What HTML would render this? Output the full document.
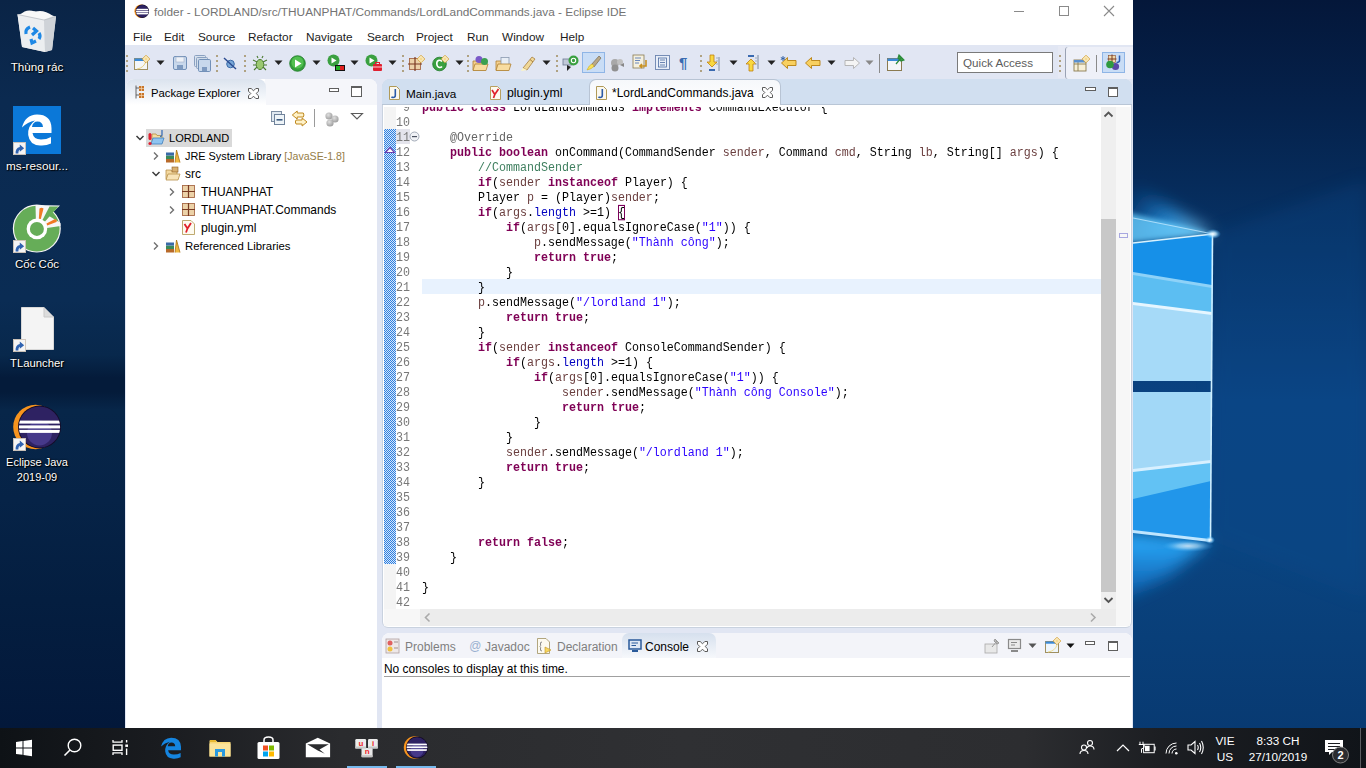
<!DOCTYPE html>
<html><head><meta charset="utf-8">
<style>
*{margin:0;padding:0;box-sizing:border-box}
html,body{width:1366px;height:768px;overflow:hidden}
body{position:relative;font-family:"Liberation Sans",sans-serif;background:#062445}
.a{position:absolute}
.dl{position:absolute;color:#fff;font-size:12px;text-align:center;width:74px;left:0;text-shadow:0 0 2px #000,1px 1px 1px #000;white-space:nowrap;line-height:15px}
.mi{position:absolute;top:30px;font-size:12px;color:#1c1c1c;white-space:pre;line-height:15px}
.code{font-family:"Liberation Mono",monospace;font-size:11.667px;white-space:pre;color:#000}
.k{color:#7f0055;font-weight:bold}
.s{color:#2a00ff}
.c{color:#3f7f5f}
.f{color:#0000c0}
.v{color:#6a3e3e}
.an{color:#646464}
.ln{position:absolute;left:0;right:0;height:15px;line-height:15px;transform:scaleY(1.1);transform-origin:0 11px}
.br{outline:1px solid #7a005a;outline-offset:-1px}
</style></head><body>
<!-- desktop -->
<div class="a" style="left:0;top:0;width:1366px;height:728px;background:linear-gradient(180deg,#0a2446 0px,#0b2a50 100px,#0a2c54 300px,#08284c 355px,#041b3a 378px,#041b3a 392px,#072649 410px,#062347 500px,#041e40 600px,#03183a 728px)"></div>
<svg class="a" style="left:1133px;top:0" width="233" height="728" viewBox="1133 0 233 728">
  <defs>
    <linearGradient id="bgR" x1="0" y1="0" x2="0" y2="728" gradientUnits="userSpaceOnUse">
      <stop offset="0" stop-color="#04173a"/>
      <stop offset="0.15" stop-color="#05224c"/>
      <stop offset="0.35" stop-color="#073468"/>
      <stop offset="0.55" stop-color="#0a4382"/>
      <stop offset="0.75" stop-color="#0a4480"/>
      <stop offset="1" stop-color="#083a72"/>
    </linearGradient>
    <linearGradient id="gTop" x1="1213" y1="234" x2="1133" y2="180" gradientUnits="userSpaceOnUse">
      <stop offset="0" stop-color="#9fe0ff" stop-opacity="0.95"/>
      <stop offset="0.5" stop-color="#2aa0f0" stop-opacity="0.7"/>
      <stop offset="1" stop-color="#0a5ab0" stop-opacity="0"/>
    </linearGradient>
    <linearGradient id="gBot" x1="1133" y1="540" x2="1133" y2="640" gradientUnits="userSpaceOnUse">
      <stop offset="0" stop-color="#2aa8f8" stop-opacity="1"/>
      <stop offset="0.5" stop-color="#1478d0" stop-opacity="0.7"/>
      <stop offset="1" stop-color="#0a4a90" stop-opacity="0"/>
    </linearGradient>
    <linearGradient id="gSide" x1="1213" y1="0" x2="1366" y2="0" gradientUnits="userSpaceOnUse">
      <stop offset="0" stop-color="#0b55a0" stop-opacity="0.7"/>
      <stop offset="1" stop-color="#0b55a0" stop-opacity="0"/>
    </linearGradient>
    <filter id="blur8" x="-50%" y="-50%" width="200%" height="200%"><feGaussianBlur stdDeviation="8"/></filter><filter id="blur3" x="-50%" y="-50%" width="200%" height="200%"><feGaussianBlur stdDeviation="2.5"/></filter>
    <radialGradient id="spot" cx="0.5" cy="0.5" r="0.5">
      <stop offset="0" stop-color="#fff" stop-opacity="1"/>
      <stop offset="0.4" stop-color="#bfe8ff" stop-opacity="0.8"/>
      <stop offset="1" stop-color="#3ab0ff" stop-opacity="0"/>
    </radialGradient>
  </defs>
  <rect x="1133" y="0" width="233" height="728" fill="url(#bgR)"/>
  <polygon points="1213,234 1366,180 1366,600 1210,540" fill="#0b4b8e" opacity="0.25" filter="url(#blur8)"/>
  <polygon points="1120,175 1213,234 1120,245" fill="url(#gTop)" filter="url(#blur8)"/><polygon points="1125,212 1213,233 1125,243" fill="#6cd0ff" opacity="0.75" filter="url(#blur3)"/>
  <polygon points="1120,531 1210,540 1170,575 1120,600" fill="url(#gBot)" filter="url(#blur8)"/>
  <!-- upper pane -->
  <polygon points="1133,243 1213,234 1212,381 1133,381" fill="#1690e8"/>
  <polygon points="1133,274 1212,287 1212,381 1133,381" fill="#5cbef2"/>
  <polygon points="1133,304 1212,314 1212,381 1133,381" fill="#a6daf8"/>
  <polygon points="1133,302 1212,312 1212,315 1133,305" fill="#e6f6ff"/>
  <polygon points="1133,272 1212,285 1212,288 1133,275" fill="#8ed2f8"/>
  <!-- lower pane -->
  <polygon points="1133,392 1212,392 1211,462 1133,471" fill="#a2d8f7"/>
  <polygon points="1133,471 1211,462 1210,540 1133,531" fill="#2196ea"/><polygon points="1133,471 1211,462 1211,481 1133,499" fill="#62c2f4"/>
  <polygon points="1133,469 1211,460 1211,463 1133,472" fill="#d8f0ff"/>
  <polygon points="1133,530 1210,539 1210,542 1133,533" fill="#bfe6ff"/>
  <!-- frame edges -->
  <line x1="1212.5" y1="234" x2="1210.5" y2="540" stroke="#cfefff" stroke-width="1.6"/>
  <line x1="1133" y1="243" x2="1213" y2="234" stroke="#d8f2ff" stroke-width="1.4"/>
  <line x1="1133" y1="218" x2="1213" y2="234" stroke="#bfe8ff" stroke-width="1.2" opacity="0.8"/>
  <ellipse cx="1213" cy="234" rx="8" ry="5" fill="url(#spot)"/>
  <ellipse cx="1188" cy="546" rx="26" ry="6" fill="url(#spot)" opacity="0.7"/><ellipse cx="1210" cy="540" rx="5" ry="4" fill="url(#spot)"/>
</svg>


<!-- eclipse window -->
<div class="a" style="left:125px;top:0;width:1008px;height:728px;background:#e1e6f3"></div>
<div class="a" style="left:125px;top:0;width:1008px;height:45px;background:#fff"></div>
<!-- title -->
<svg class="a" style="left:134px;top:4px" width="16" height="15" viewBox="0 0 16 15">
<defs><clipPath id="ecl3"><circle cx="8.3" cy="7.3" r="6.2"/></clipPath></defs>
<circle cx="7.2" cy="7.3" r="6.8" fill="#f7941e"/><circle cx="8.3" cy="7.3" r="6.7" fill="#140c28"/><circle cx="8.3" cy="7.3" r="6.2" fill="#2e2262"/>
<g clip-path="url(#ecl3)"><rect x="0" y="4.8" width="16" height="1.5" fill="#fff"/><rect x="0" y="6.9" width="16" height="1.5" fill="#fff"/><rect x="0" y="8.9" width="16" height="1.5" fill="#fff"/></g>
</svg>
<div class="a" style="left:154px;top:4px;font-size:11.84px;color:#737373;white-space:pre;line-height:16px">folder - LORDLAND/src/THUANPHAT/Commands/LordLandCommands.java - Eclipse IDE</div>
<div class="a" style="left:1014px;top:11px;width:10px;height:1px;background:#8a8a8a"></div>
<div class="a" style="left:1059px;top:6px;width:10px;height:10px;border:1px solid #8a8a8a"></div>
<svg class="a" style="left:1103px;top:5px" width="12" height="12" viewBox="0 0 12 12"><path d="M1 1L11 11M11 1L1 11" stroke="#8a8a8a" stroke-width="1.1"/></svg>
<!-- menu -->
<div class="mi" style="left:133px;font-size:11.8px">File</div>
<div class="mi" style="left:164px;font-size:11.8px">Edit</div>
<div class="mi" style="left:198px;font-size:11.8px">Source</div>
<div class="mi" style="left:248px;font-size:11.8px">Refactor</div>
<div class="mi" style="left:306px;font-size:11.8px">Navigate</div>
<div class="mi" style="left:367px;font-size:11.8px">Search</div>
<div class="mi" style="left:416px;font-size:11.8px">Project</div>
<div class="mi" style="left:467px;font-size:11.8px">Run</div>
<div class="mi" style="left:502px;font-size:11.8px">Window</div>
<div class="mi" style="left:560px;font-size:11.8px">Help</div>
<!-- toolbar -->
<div class="a" style="left:125px;top:45px;width:1008px;height:34px;background:#e1e6f3"></div>
<div class="a" style="left:126px;top:55px;width:2px;height:17px;background:repeating-linear-gradient(180deg,#b0a282 0 2px,transparent 2px 5px)"></div>
<svg class="a" style="left:134px;top:55px" width="16" height="16" viewBox="0 0 16 16"><rect x="0.5" y="3.5" width="13" height="11" fill="#f4f6f8" stroke="#a09060"/><rect x="0.5" y="3.5" width="13" height="2.5" fill="#3a8ad8"/><path d="M3 14Q10 13 12 6" stroke="#e8d080" fill="none"/><path d="M12 0.3L15.7 4L12 7.7L8.3 4Z" fill="#fffbe8" stroke="#d49a20" stroke-width="0.9"/><path d="M12 2V6M10 4H14" stroke="#f0c860" stroke-width="0.8"/></svg>
<svg class="a" style="left:156px;top:60px" width="9" height="6" viewBox="0 0 9 6"><path d="M0.5 0.5H8.5L4.5 5Z" fill="#222"/></svg>
<svg class="a" style="left:172px;top:55px" width="16" height="16" viewBox="0 0 16 16"><rect x="1.5" y="1.5" width="13" height="13" rx="1.5" fill="#c8d8ec" stroke="#7290b8"/><rect x="4" y="2" width="8" height="5" fill="#eef2f8" stroke="#a0b0c8" stroke-width="0.6"/><rect x="5" y="10" width="6" height="4.5" fill="#7e9ac0"/></svg>
<svg class="a" style="left:194px;top:55px" width="17" height="17" viewBox="0 0 17 17"><rect x="0.5" y="0.5" width="11" height="11" rx="1" fill="#d8e2ee" stroke="#8aa0c0"/><rect x="2.5" y="2.5" width="11" height="11" rx="1" fill="#d0dcea" stroke="#8aa0c0"/><rect x="4.5" y="4.5" width="12" height="12" rx="1.2" fill="#c8d8ec" stroke="#7290b8"/><rect x="8" y="12" width="5" height="4" fill="#7e9ac0"/></svg>
<div class="a" style="left:216px;top:55px;width:2px;height:17px;background:repeating-linear-gradient(180deg,#b0a282 0 2px,transparent 2px 5px)"></div>
<svg class="a" style="left:222px;top:55px" width="16" height="16" viewBox="0 0 16 16"><circle cx="8.5" cy="9" r="3.8" fill="#7aa8d8" stroke="#3a6aa8"/><path d="M2 3L14 14" stroke="#2a4a90" stroke-width="1.4"/></svg>
<div class="a" style="left:244px;top:55px;width:2px;height:17px;background:repeating-linear-gradient(180deg,#b0a282 0 2px,transparent 2px 5px)"></div>
<svg class="a" style="left:252px;top:55px" width="16" height="16" viewBox="0 0 16 16"><ellipse cx="8" cy="9.5" rx="3.8" ry="5" fill="#9ac870" stroke="#4a7a30"/><path d="M1 5L5 7M15 5L11 7M1 10H4M15 10H12M2 15L5 12M14 15L11 12M6 3L5 1M10 3L11 1" stroke="#4a7a30" stroke-width="1.1"/></svg>
<svg class="a" style="left:274px;top:60px" width="9" height="6" viewBox="0 0 9 6"><path d="M0.5 0.5H8.5L4.5 5Z" fill="#222"/></svg>
<svg class="a" style="left:289px;top:55px" width="17" height="17" viewBox="0 0 17 17"><circle cx="8.5" cy="8.5" r="7.8" fill="#34a03a" stroke="#1e7a28" stroke-width="0.8"/><circle cx="8.5" cy="7.5" r="6" fill="#52c050"/><path d="M6 4.5L12.5 8.5L6 12.5Z" fill="#fff"/></svg>
<svg class="a" style="left:312px;top:60px" width="9" height="6" viewBox="0 0 9 6"><path d="M0.5 0.5H8.5L4.5 5Z" fill="#222"/></svg>
<svg class="a" style="left:327px;top:54px" width="18" height="18" viewBox="0 0 18 18"><circle cx="6.5" cy="6.5" r="6" fill="#3aa040"/><path d="M4.5 3.5L9.5 6.5L4.5 9.5Z" fill="#fff"/><rect x="8" y="11" width="10" height="6" fill="#111"/><rect x="9" y="12" width="4" height="4" fill="#20b020"/><rect x="13" y="12" width="4" height="4" fill="#e02020"/></svg>
<svg class="a" style="left:350px;top:60px" width="9" height="6" viewBox="0 0 9 6"><path d="M0.5 0.5H8.5L4.5 5Z" fill="#222"/></svg>
<svg class="a" style="left:365px;top:54px" width="18" height="18" viewBox="0 0 18 18"><circle cx="6.5" cy="6.5" r="6" fill="#3aa040"/><path d="M4.5 3.5L9.5 6.5L4.5 9.5Z" fill="#fff"/><rect x="8" y="10" width="9" height="7" rx="1" fill="#e02030"/><rect x="10.5" y="8.5" width="4" height="2.5" fill="none" stroke="#e02030"/><path d="M8 13H17" stroke="#fff" stroke-width="0.8"/></svg>
<svg class="a" style="left:388px;top:60px" width="9" height="6" viewBox="0 0 9 6"><path d="M0.5 0.5H8.5L4.5 5Z" fill="#222"/></svg>
<div class="a" style="left:402px;top:55px;width:2px;height:17px;background:repeating-linear-gradient(180deg,#b0a282 0 2px,transparent 2px 5px)"></div>
<svg class="a" style="left:408px;top:55px" width="17" height="17" viewBox="0 0 17 17"><rect x="1.5" y="3.5" width="11" height="11" fill="#ecd2a8" stroke="#a86a48" stroke-width="0.9"/><path d="M7 2V16M0 9H14" stroke="#7a3a22" stroke-width="1.2"/><path d="M13 0.3L16.7 4L13 7.7L9.3 4Z" fill="#fffbe8" stroke="#d49a20" stroke-width="0.9"/><path d="M13 2V6M11 4H15" stroke="#f0c860" stroke-width="0.8"/></svg>
<svg class="a" style="left:432px;top:55px" width="17" height="17" viewBox="0 0 17 17"><circle cx="7.5" cy="9" r="6.8" fill="#3aa040" stroke="#1e7a28" stroke-width="0.8"/><path d="M10 6.5Q8.5 5 7 5.3Q4.5 6 4.8 9Q5 12 7.5 12.5Q9 12.7 10 11.5" fill="none" stroke="#fff" stroke-width="1.6"/><path d="M13 0.3L16.7 4L13 7.7L9.3 4Z" fill="#fffbe8" stroke="#d49a20" stroke-width="0.9"/><path d="M13 2V6M11 4H15" stroke="#f0c860" stroke-width="0.8"/></svg>
<svg class="a" style="left:455px;top:60px" width="9" height="6" viewBox="0 0 9 6"><path d="M0.5 0.5H8.5L4.5 5Z" fill="#222"/></svg>
<div class="a" style="left:467px;top:55px;width:2px;height:17px;background:repeating-linear-gradient(180deg,#b0a282 0 2px,transparent 2px 5px)"></div>
<svg class="a" style="left:472px;top:55px" width="18" height="17" viewBox="0 0 18 17"><path d="M1 6H6L7 7.5H13V15H1Z" fill="#f4d090" stroke="#b08030" stroke-width="0.8"/><path d="M3 9H16L14 15.5H1Z" fill="#f8dca0" stroke="#b08030" stroke-width="0.8"/><circle cx="7" cy="4.5" r="3.5" fill="#7a5ac8"/><circle cx="12.5" cy="6.5" r="3.5" fill="#3aa050"/></svg>
<svg class="a" style="left:495px;top:55px" width="18" height="17" viewBox="0 0 18 17"><path d="M1 6H6L7 7.5H13V15H1Z" fill="#f4d090" stroke="#b08030" stroke-width="0.8"/><rect x="6" y="2.5" width="8" height="7" fill="#e8eef6" stroke="#8a9ab0" stroke-width="0.8"/><path d="M3 9H16L14 15.5H1Z" fill="#f8dca0" stroke="#b08030" stroke-width="0.8"/></svg>
<svg class="a" style="left:519px;top:54px" width="18" height="18" viewBox="0 0 18 18"><path d="M4 14L13 3L16 5L8 16Z" fill="#f0d898" stroke="#a88040" stroke-width="0.8"/><path d="M2 17L4 14L8 16Z" fill="#fff6c0"/><path d="M11 5.5L14 8" stroke="#a88040"/></svg>
<svg class="a" style="left:542px;top:60px" width="9" height="6" viewBox="0 0 9 6"><path d="M0.5 0.5H8.5L4.5 5Z" fill="#222"/></svg>
<div class="a" style="left:556px;top:55px;width:2px;height:17px;background:repeating-linear-gradient(180deg,#b0a282 0 2px,transparent 2px 5px)"></div>
<svg class="a" style="left:562px;top:55px" width="17" height="17" viewBox="0 0 17 17"><rect x="1" y="4" width="9" height="6" fill="#c0c8d8" stroke="#6a7890" stroke-width="0.8"/><path d="M5 10V16L9 12Z" fill="#222"/><circle cx="11.5" cy="5.5" r="5" fill="#3aa040"/><circle cx="11.5" cy="5.5" r="2.2" fill="none" stroke="#fff" stroke-width="1.1"/></svg>
<div class="a" style="left:582px;top:52px;width:23px;height:21px;background:#c9ddf6;border:1px solid #8fb5e6"></div>
<svg class="a" style="left:585px;top:54px" width="18" height="18" viewBox="0 0 18 18"><path d="M6 11L14 2L16 4L9 13Z" fill="#b8a888" stroke="#7a6a50" stroke-width="0.7"/><path d="M2 16Q4 11 7 10L9 12Q7 15 2 16Z" fill="#f6e060" stroke="#d0b020" stroke-width="0.6"/></svg>
<svg class="a" style="left:609px;top:55px" width="17" height="17" viewBox="0 0 17 17"><circle cx="6" cy="8" r="4" fill="#a8a8a8"/><circle cx="6" cy="13" r="3.5" fill="#909090"/><circle cx="11" cy="7" r="3" fill="#c0c0c0"/><path d="M11 10L15 8V12Z" fill="#888"/></svg>
<svg class="a" style="left:632px;top:54px" width="17" height="17" viewBox="0 0 17 17"><rect x="1" y="1" width="11" height="13" fill="#f4f0e0" stroke="#8a7a50" stroke-width="0.8"/><path d="M3 4H9M3 6.5H8M3 9H7" stroke="#5a7ab8" stroke-width="0.9"/><path d="M14 6V12H8M10 10L8 12L10 14" fill="none" stroke="#c89020" stroke-width="1.6"/></svg>
<svg class="a" style="left:654px;top:54px" width="17" height="17" viewBox="0 0 17 17"><rect x="1.5" y="1.5" width="14" height="14" fill="#e8eef8" stroke="#6a84b0" stroke-width="0.9"/><rect x="4.5" y="4" width="8" height="9" fill="none" stroke="#4a6aa0" stroke-width="0.8"/><path d="M6 6H11M6 8.5H11M6 11H11" stroke="#4a6aa0" stroke-width="0.8"/></svg>
<div class="a" style="left:679px;top:54px;font-size:15px;font-weight:bold;color:#3a6ab0;line-height:18px">¶</div>
<div class="a" style="left:700px;top:55px;width:2px;height:17px;background:repeating-linear-gradient(180deg,#b0a282 0 2px,transparent 2px 5px)"></div>
<svg class="a" style="left:704px;top:54px" width="18" height="18" viewBox="0 0 18 18"><path d="M6 1H10V8H13L8 13L3 8H6Z" fill="#f8d840" stroke="#c08010" stroke-width="0.8"/><path d="M15 3V17" stroke="#7a8aa0"/><path d="M12 4H14M12 7H14M12 10H14" stroke="#a0b0c0"/><rect x="5" y="15" width="6" height="2" fill="#3a6ab0"/></svg>
<svg class="a" style="left:729px;top:60px" width="9" height="6" viewBox="0 0 9 6"><path d="M0.5 0.5H8.5L4.5 5Z" fill="#222"/></svg>
<svg class="a" style="left:743px;top:54px" width="18" height="18" viewBox="0 0 18 18"><path d="M6 17H10V10H13L8 5L3 10H6Z" fill="#f8d840" stroke="#c08010" stroke-width="0.8"/><path d="M15 1V15" stroke="#7a8aa0"/><path d="M12 4H14M12 7H14M12 10H14" stroke="#a0b0c0"/><rect x="5" y="1" width="6" height="2" fill="#3a6ab0"/></svg>
<svg class="a" style="left:767px;top:60px" width="9" height="6" viewBox="0 0 9 6"><path d="M0.5 0.5H8.5L4.5 5Z" fill="#222"/></svg>
<svg class="a" style="left:780px;top:55px" width="18" height="16" viewBox="0 0 18 16"><path d="M1.5 8L7.5 2.5V5.5H16V10.5H7.5V13.5Z" fill="#f8d060" stroke="#b88010" stroke-width="0.9"/><path d="M3 1L3 6M0.8 2.5L5.2 4.5M0.8 4.5L5.2 2.5" stroke="#2a5aa0" stroke-width="0.9"/></svg>
<svg class="a" style="left:804px;top:55px" width="18" height="16" viewBox="0 0 18 16"><path d="M1.5 8L7.5 2.5V5.5H16V10.5H7.5V13.5Z" fill="#f8d060" stroke="#b88010" stroke-width="0.9"/></svg>
<svg class="a" style="left:827px;top:60px" width="9" height="6" viewBox="0 0 9 6"><path d="M0.5 0.5H8.5L4.5 5Z" fill="#222"/></svg>
<svg class="a" style="left:843px;top:55px" width="18" height="16" viewBox="0 0 18 16"><path d="M16.5 8L10.5 2.5V5.5H2V10.5H10.5V13.5Z" fill="#f4f4f4" stroke="#b0b0b0" stroke-width="0.9"/></svg>
<svg class="a" style="left:865px;top:60px" width="9" height="6" viewBox="0 0 9 6"><path d="M0.5 0.5H8.5L4.5 5Z" fill="#888"/></svg>
<div class="a" style="left:879px;top:54px;width:1px;height:19px;background:#8a8a8a"></div>
<svg class="a" style="left:887px;top:54px" width="18" height="18" viewBox="0 0 18 18"><rect x="0.5" y="4.5" width="14" height="12" fill="#f4f6f8" stroke="#8a7a50"/><rect x="0.5" y="4.5" width="14" height="2.5" fill="#3a8ad8"/><path d="M9 10L14 4M12 1L17 6L14 7L11 4Z" stroke="#2a8a3a" fill="#3aa040" stroke-width="1.2"/></svg>
<div class="a" style="left:957px;top:52px;width:96px;height:21px;background:#fff;border:1px solid #7a7a7a"></div>
<div class="a" style="left:963px;top:55px;font-size:11.66px;color:#5c5c5c;white-space:pre;line-height:15px">Quick Access</div>
<div class="a" style="left:1058px;top:46px;width:8px;height:32px;background:#e6e9f4"></div><div class="a" style="left:1065px;top:47px;width:68px;height:32px;background:#eef0f8;border-left:1px solid #9aa2b4;border-top-left-radius:3px;border-bottom-left-radius:3px"></div>
<div class="a" style="left:1059px;top:55px;width:2px;height:17px;background:repeating-linear-gradient(180deg,#b0a282 0 2px,transparent 2px 5px)"></div>
<svg class="a" style="left:1073px;top:55px" width="17" height="17" viewBox="0 0 17 17"><rect x="1" y="5" width="12" height="11" fill="#f8f0d8" stroke="#8a7a50" stroke-width="0.9"/><path d="M1 9H13M5 5V16" stroke="#8a7a50" stroke-width="0.9"/><rect x="1" y="5" width="12" height="2.5" fill="#5a90d0"/><path d="M13 0.3L16.7 4L13 7.7L9.3 4Z" fill="#fffbe8" stroke="#d49a20" stroke-width="0.9"/><path d="M13 2V6M11 4H15" stroke="#f0c860" stroke-width="0.8"/></svg>
<div class="a" style="left:1096px;top:55px;width:1px;height:17px;background:#8a8a8a"></div>
<div class="a" style="left:1102px;top:52px;width:23px;height:21px;background:#c9ddf6;border:1px solid #8fb5e6"></div>
<svg class="a" style="left:1104px;top:54px" width="19" height="18" viewBox="0 0 19 18"><rect x="4.5" y="1.5" width="7" height="7" fill="#f0d8a8" stroke="#8a4a28" stroke-width="0.6"/><path d="M8 0.5V9.5M3.5 5H12.5" stroke="#7a3a22" stroke-width="1"/><path d="M15.5 1.5V6.5Q15.5 8.5 12.5 8.5" fill="none" stroke="#2a5ab0" stroke-width="1.5"/><circle cx="11.5" cy="12.5" r="3.6" fill="#5a48a8"/><circle cx="6" cy="10.5" r="3.8" fill="#2f9a40"/></svg>

<!-- package explorer panel -->
<div class="a" style="left:126px;top:79px;width:251px;height:649px;background:#fff;border-top-left-radius:8px;border-top-right-radius:8px"></div>
<div class="a" style="left:265px;top:79px;width:112px;height:26px;background:#f5f6fa;border-top-right-radius:8px"></div>
<div class="a" style="left:126px;top:79px;width:140px;height:26px;background:linear-gradient(180deg,#dbe3ee 0%,#f3f6fa 70%,#fff 100%);border-top-left-radius:8px;border-top-right-radius:8px"></div>
<div class="a" style="left:151px;top:86px;font-size:11.3px;color:#000;white-space:pre;line-height:15px">Package Explorer</div>

<!-- PE toolbar icons -->
<svg class="a" style="left:270px;top:110px" width="16" height="16" viewBox="0 0 16 16">
 <rect x="1.5" y="1.5" width="10" height="10" fill="#dfe8f0" stroke="#7d8ea3"/>
 <rect x="4.5" y="4.5" width="10" height="10" fill="#eef4f8" stroke="#6f829a"/>
 <rect x="6.5" y="9" width="6" height="1.6" fill="#3a5a80"/>
</svg>
<svg class="a" style="left:291px;top:110px" width="17" height="17" viewBox="0 0 17 17"><path d="M1.3 5L6.2 1V3H12.3Q13.6 5 12.3 7H6.2V9Z" fill="#fff2c8" stroke="#c08a20" stroke-width="1"/><path d="M16 12L11.1 8V10H5Q3.7 12 5 14H11.1V16Z" fill="#fff2c8" stroke="#c08a20" stroke-width="1"/></svg>
<div class="a" style="left:314px;top:109px;width:1px;height:18px;background:#9a9a9a"></div>
<svg class="a" style="left:324px;top:111px" width="16" height="16" viewBox="0 0 16 16"><defs><radialGradient id="gb" cx="0.4" cy="0.35" r="0.7"><stop offset="0" stop-color="#e0e0e0"/><stop offset="1" stop-color="#9a9a9a"/></radialGradient></defs><circle cx="5" cy="5" r="3.6" fill="url(#gb)"/><circle cx="11" cy="8" r="3.6" fill="url(#gb)"/><circle cx="6" cy="12" r="3.6" fill="url(#gb)"/></svg>
<svg class="a" style="left:350px;top:112px" width="14" height="8" viewBox="0 0 14 8"><path d="M1.5 1.5H12.5L7 7Z" fill="none" stroke="#5a5a5a" stroke-width="1.1"/></svg>
<!-- minimize / maximize -->
<div class="a" style="left:329px;top:88px;width:10px;height:4px;border:1px solid #5f5f5f;background:#fff"></div>
<div class="a" style="left:351px;top:86px;width:11px;height:11px;border:1px solid #5f5f5f;border-top-width:2px;background:#fff"></div>
<!-- tab icon -->
<svg class="a" style="left:135px;top:85px" width="10" height="14" viewBox="0 0 10 14">
 <path d="M1 0.5V13.5M1 3H4M1 10H4" stroke="#555" stroke-width="0.9" fill="none"/>
 <rect x="4" y="1" width="5" height="5" fill="#c8752a"/><rect x="4" y="8" width="5" height="5" fill="#c8752a"/>
 <path d="M6.5 1V6M4 3.5H9M6.5 8V13M4 10.5H9" stroke="#f2d6b0" stroke-width="0.7"/>
</svg>
<svg class="a" style="left:248px;top:88px" width="11" height="11" viewBox="0 0 11 11"><polygon points="0.5,0.5 3.2,0.5 5.5,2.8 7.8,0.5 10.5,0.5 10.5,3.2 8.2,5.5 10.5,7.8 10.5,10.5 7.8,10.5 5.5,8.2 3.2,10.5 0.5,10.5 0.5,7.8 2.8,5.5 0.5,3.2" fill="#fff" stroke="#5a5a5a" stroke-width="1"/></svg>
<!-- tree -->
<div class="a" style="left:146px;top:129px;width:86px;height:18px;background:#d9d9d9"></div>
<svg class="a" style="left:135px;top:133px" width="10" height="10" viewBox="0 0 10 10"><path d="M1.5 3L5 6.5L8.5 3" fill="none" stroke="#3a3a3a" stroke-width="1.5"/></svg>
<svg class="a" style="left:148px;top:129px" width="17" height="17" viewBox="0 0 17 17">
 <path d="M4 5H8L9 6.5H14V14H4Z" fill="#f4dca0" stroke="#b89040" stroke-width="0.8"/>
 <path d="M5 9H16L14 15H3Z" fill="#8fc4f0" stroke="#4080c0" stroke-width="0.8"/>
 <path d="M14 1V6Q14 7.5 12 7.5" fill="none" stroke="#3a6fb8" stroke-width="1.3"/>
 <rect x="0.5" y="4" width="3" height="7" rx="1.5" fill="#e02030"/><circle cx="2" cy="14.5" r="1.6" fill="#e02030"/>
</svg>
<div class="a" style="left:169px;top:131px;font-size:11.07px;white-space:pre;line-height:15px">LORDLAND</div>

<svg class="a" style="left:151px;top:151px" width="10" height="10" viewBox="0 0 10 10"><path d="M3 1.5L6.5 5L3 8.5" fill="none" stroke="#707070" stroke-width="1.4"/></svg>
<svg class="a" style="left:165px;top:148px" width="16" height="16" viewBox="0 0 16 16">
 <rect x="1" y="11" width="8" height="3.5" fill="#b86a2a"/><rect x="1" y="7.5" width="8" height="3.5" fill="#3a8a5a"/><rect x="1" y="4.5" width="8" height="3" fill="#3a6aa8"/>
 <path d="M10 14.5L11.5 2L15 14.5" fill="#f0b840" stroke="#a87010" stroke-width="0.8"/>
</svg>
<div class="a" style="left:185px;top:149px;font-size:10.9px;white-space:pre;line-height:15px">JRE System Library <span style="color:#957d47;font-size:10.6px">[JavaSE-1.8]</span></div>

<svg class="a" style="left:151px;top:169px" width="10" height="10" viewBox="0 0 10 10"><path d="M1.5 3L5 6.5L8.5 3" fill="none" stroke="#3a3a3a" stroke-width="1.5"/></svg>
<svg class="a" style="left:165px;top:166px" width="16" height="16" viewBox="0 0 16 16">
 <path d="M1 4H6L7 5.5H12V13H1Z" fill="#f4d9a0" stroke="#b8904a" stroke-width="0.8"/>
 <path d="M3 8H15L13 14H1Z" fill="#f8e4b8" stroke="#b8904a" stroke-width="0.8"/>
 <rect x="7" y="1" width="6" height="5" fill="#d8b070" stroke="#8a5a20" stroke-width="0.6"/>
</svg>
<div class="a" style="left:185px;top:167px;font-size:12px;white-space:pre;line-height:15px">src</div>

<svg class="a" style="left:167px;top:187px" width="10" height="10" viewBox="0 0 10 10"><path d="M3 1.5L6.5 5L3 8.5" fill="none" stroke="#707070" stroke-width="1.4"/></svg>
<svg class="a" style="left:182px;top:185px" width="13" height="13" viewBox="0 0 13 13"><rect x="0.5" y="0.5" width="12" height="12" fill="#ecd2a8" stroke="#a86a48" stroke-width="0.9"/><path d="M6.5 0V13M0 6.5H13" stroke="#7a3a22" stroke-width="1.2"/></svg>
<div class="a" style="left:201px;top:185px;font-size:11.96px;white-space:pre;line-height:15px">THUANPHAT</div>

<svg class="a" style="left:167px;top:205px" width="10" height="10" viewBox="0 0 10 10"><path d="M3 1.5L6.5 5L3 8.5" fill="none" stroke="#707070" stroke-width="1.4"/></svg>
<svg class="a" style="left:182px;top:203px" width="13" height="13" viewBox="0 0 13 13"><rect x="0.5" y="0.5" width="12" height="12" fill="#ecd2a8" stroke="#a86a48" stroke-width="0.9"/><path d="M6.5 0V13M0 6.5H13" stroke="#7a3a22" stroke-width="1.2"/></svg>
<div class="a" style="left:201px;top:203px;font-size:11.96px;white-space:pre;line-height:15px">THUANPHAT.Commands</div>

<svg class="a" style="left:182px;top:220px" width="13" height="15" viewBox="0 0 13 15"><path d="M0.5 0.5H9L12.5 4V14.5H0.5Z" fill="#fdfaf0" stroke="#b8a060" stroke-width="0.9"/><path d="M2.5 4L5.5 8.5L9 3M5.5 8.5L4 12.5" fill="none" stroke="#e0202a" stroke-width="1.8"/></svg>
<div class="a" style="left:201px;top:221px;font-size:12.3px;white-space:pre;line-height:15px">plugin.yml</div>

<svg class="a" style="left:151px;top:241px" width="10" height="10" viewBox="0 0 10 10"><path d="M3 1.5L6.5 5L3 8.5" fill="none" stroke="#707070" stroke-width="1.4"/></svg>
<svg class="a" style="left:165px;top:238px" width="16" height="16" viewBox="0 0 16 16">
 <rect x="1" y="11" width="8" height="3.5" fill="#b86a2a"/><rect x="1" y="7.5" width="8" height="3.5" fill="#3a8a5a"/><rect x="1" y="4.5" width="8" height="3" fill="#3a6aa8"/>
 <path d="M10 14.5L11.5 2L15 14.5" fill="#f0b840" stroke="#a87010" stroke-width="0.8"/>
</svg>
<div class="a" style="left:185px;top:239px;font-size:11.36px;white-space:pre;line-height:15px">Referenced Libraries</div>


<!-- editor panel -->
<div class="a" style="left:382px;top:79px;width:750px;height:549px;background:#fff;border:1px solid #c9d2df;border-radius:8px 8px 6px 6px"></div>
<div class="a" style="left:382px;top:79px;width:750px;height:26px;background:#d1dff0;border-radius:8px 8px 0 0;border-bottom:1px solid #b9c6d6"></div>
<div class="a" style="left:589px;top:79px;width:192px;height:26px;background:linear-gradient(180deg,#f6f8fb,#fff);border-radius:7px 7px 0 0;border:1px solid #b8c4d4;border-bottom:none"></div>
<div class="a" style="left:406px;top:86px;font-size:11.75px;white-space:pre;line-height:15px">Main.java</div>
<div class="a" style="left:507px;top:86px;font-size:12.3px;white-space:pre;line-height:15px">plugin.yml</div>
<div class="a" style="left:612px;top:86px;font-size:11.97px;white-space:pre;line-height:15px">*LordLandCommands.java</div>
<div class="a" style="left:384px;top:107px;width:12px;height:502px;background:#f4f4f4"></div>
<div class="a" style="left:384px;top:129px;width:12px;height:435px;background:repeating-conic-gradient(#2f7fe0 0 25%,#d4e6fa 0 50%) 0 0/2px 2px"></div>
<div class="a" style="left:396px;top:129px;width:14px;height:15px;background:#e4e4ec"></div>
<div class="a" style="left:422px;top:279px;width:679px;height:15px;background:#e8f2fe"></div>
<div class="a code" style="left:396px;top:107px;width:14px;height:502px;overflow:hidden;color:#787878;text-align:right"><div class="ln" style="top:-6px">9</div><div class="ln" style="top:9px">10</div><div class="ln" style="top:24px">11</div><div class="ln" style="top:39px">12</div><div class="ln" style="top:54px">13</div><div class="ln" style="top:69px">14</div><div class="ln" style="top:84px">15</div><div class="ln" style="top:99px">16</div><div class="ln" style="top:114px">17</div><div class="ln" style="top:129px">18</div><div class="ln" style="top:144px">19</div><div class="ln" style="top:159px">20</div><div class="ln" style="top:174px">21</div><div class="ln" style="top:189px">22</div><div class="ln" style="top:204px">23</div><div class="ln" style="top:219px">24</div><div class="ln" style="top:234px">25</div><div class="ln" style="top:249px">26</div><div class="ln" style="top:264px">27</div><div class="ln" style="top:279px">28</div><div class="ln" style="top:294px">29</div><div class="ln" style="top:309px">30</div><div class="ln" style="top:324px">31</div><div class="ln" style="top:339px">32</div><div class="ln" style="top:354px">33</div><div class="ln" style="top:369px">34</div><div class="ln" style="top:384px">35</div><div class="ln" style="top:399px">36</div><div class="ln" style="top:414px">37</div><div class="ln" style="top:429px">38</div><div class="ln" style="top:444px">39</div><div class="ln" style="top:459px">40</div><div class="ln" style="top:474px">41</div><div class="ln" style="top:489px">42</div></div>
<div class="a code" style="left:422px;top:107px;width:679px;height:502px;overflow:hidden"><div class="ln" style="top:-6px"><span class="k">public</span> <span class="k">class</span> LordLandCommands <span class="k">implements</span> CommandExecutor {</div><div class="ln" style="top:9px"></div><div class="ln" style="top:24px">    <span class="an">@Override</span></div><div class="ln" style="top:39px">    <span class="k">public</span> <span class="k">boolean</span> onCommand(CommandSender <span class="v">sender</span>, Command <span class="v">cmd</span>, String <span class="v">lb</span>, String[] <span class="v">args</span>) {</div><div class="ln" style="top:54px">        <span class="c">//CommandSender</span></div><div class="ln" style="top:69px">        <span class="k">if</span>(<span class="v">sender</span> <span class="k">instanceof</span> Player) {</div><div class="ln" style="top:84px">        Player <span class="v">p</span> = (Player)<span class="v">sender</span>;</div><div class="ln" style="top:99px">        <span class="k">if</span>(<span class="v">args</span>.<span class="f">length</span> &gt;=1) <span class="br">{</span></div><div class="ln" style="top:114px">            <span class="k">if</span>(<span class="v">args</span>[0].equalsIgnoreCase(<span class="s">"1"</span>)) {</div><div class="ln" style="top:129px">                <span class="v">p</span>.sendMessage(<span class="s">"Thành công"</span>);</div><div class="ln" style="top:144px">                <span class="k">return</span> <span class="k">true</span>;</div><div class="ln" style="top:159px">            }</div><div class="ln" style="top:174px">        }</div><div class="ln" style="top:189px">        <span class="v">p</span>.sendMessage(<span class="s">"/lordland 1"</span>);</div><div class="ln" style="top:204px">            <span class="k">return</span> <span class="k">true</span>;</div><div class="ln" style="top:219px">        }</div><div class="ln" style="top:234px">        <span class="k">if</span>(<span class="v">sender</span> <span class="k">instanceof</span> ConsoleCommandSender) {</div><div class="ln" style="top:249px">            <span class="k">if</span>(<span class="v">args</span>.<span class="f">length</span> &gt;=1) {</div><div class="ln" style="top:264px">                <span class="k">if</span>(<span class="v">args</span>[0].equalsIgnoreCase(<span class="s">"1"</span>)) {</div><div class="ln" style="top:279px">                    <span class="v">sender</span>.sendMessage(<span class="s">"Thành công Console"</span>);</div><div class="ln" style="top:294px">                    <span class="k">return</span> <span class="k">true</span>;</div><div class="ln" style="top:309px">                }</div><div class="ln" style="top:324px">            }</div><div class="ln" style="top:339px">            <span class="v">sender</span>.sendMessage(<span class="s">"/lordland 1"</span>);</div><div class="ln" style="top:354px">            <span class="k">return</span> <span class="k">true</span>;</div><div class="ln" style="top:369px">        }</div><div class="ln" style="top:384px"></div><div class="ln" style="top:399px"></div><div class="ln" style="top:414px"></div><div class="ln" style="top:429px">        <span class="k">return</span> <span class="k">false</span>;</div><div class="ln" style="top:444px">    }</div><div class="ln" style="top:459px"></div><div class="ln" style="top:474px">}</div><div class="ln" style="top:489px"></div></div>
<svg class="a" style="left:409px;top:131px" width="11" height="11" viewBox="0 0 11 11"><circle cx="5.5" cy="5.5" r="4.5" fill="#f0f2f6" stroke="#9aa3b0" stroke-width="0.9"/><rect x="3" y="5" width="5" height="1.2" fill="#4a5160"/></svg>
<svg class="a" style="left:384px;top:146px" width="12" height="8" viewBox="0 0 12 8"><path d="M1.5 6.5L6 1.5L10.5 6.5Z" fill="#fff" stroke="#6b3fb0" stroke-width="1.2"/></svg>
<div class="a" style="left:1101px;top:107px;width:15px;height:502px;background:#efefef"></div>
<div class="a" style="left:1101px;top:219px;width:15px;height:373px;background:#c8c8c8"></div>
<svg class="a" style="left:1101px;top:107px" width="15" height="15" viewBox="0 0 15 15"><path d="M3.5 9.5L7.5 5.5L11.5 9.5" fill="none" stroke="#555" stroke-width="1.8"/></svg>
<svg class="a" style="left:1101px;top:592px" width="15" height="17" viewBox="0 0 15 17"><path d="M3.5 6L7.5 10L11.5 6" fill="none" stroke="#555" stroke-width="1.8"/></svg>
<div class="a" style="left:1116px;top:107px;width:14px;height:519px;background:#f7f7f7"></div>
<div class="a" style="left:1119px;top:233px;width:9px;height:5px;border:1px solid #a8a8e0"></div>
<div class="a" style="left:384px;top:609px;width:36px;height:17px;background:#f7f7f7"></div>
<div class="a" style="left:420px;top:609px;width:681px;height:17px;background:#ececec"></div>
<div class="a" style="left:1101px;top:609px;width:15px;height:17px;background:#ececec"></div>
<svg class="a" style="left:420px;top:609px" width="16" height="17" viewBox="0 0 16 17"><path d="M9.5 4.5L5.5 8.5L9.5 12.5" fill="none" stroke="#aaa" stroke-width="1.6"/></svg>
<svg class="a" style="left:1085px;top:609px" width="16" height="17" viewBox="0 0 16 17"><path d="M6 4.5L10 8.5L6 12.5" fill="none" stroke="#aaa" stroke-width="1.6"/></svg>


<!-- editor tab icons -->
<svg class="a" style="left:389px;top:86px" width="11" height="14" viewBox="0 0 11 14"><path d="M0.5 0.5H7.5L10.5 3.5V13.5H0.5Z" fill="#fbf8ee" stroke="#b09a58" stroke-width="1"/><path d="M6.3 3V9.5Q6.3 11.5 4 11.5Q3 11.5 2.5 10.8" fill="none" stroke="#2a5aa8" stroke-width="1.6"/></svg>
<svg class="a" style="left:490px;top:86px" width="11" height="14" viewBox="0 0 11 14"><path d="M0.5 0.5H7.5L10.5 3.5V13.5H0.5Z" fill="#fdfaf0" stroke="#b8a060" stroke-width="1"/><path d="M2 4L4.8 8.5L8.5 3M4.8 8.5L3.5 12" fill="none" stroke="#e0202a" stroke-width="1.7"/></svg>
<svg class="a" style="left:596px;top:86px" width="11" height="14" viewBox="0 0 11 14"><path d="M0.5 0.5H7.5L10.5 3.5V13.5H0.5Z" fill="#fbf8ee" stroke="#b09a58" stroke-width="1"/><path d="M6.3 3V9.5Q6.3 11.5 4 11.5Q3 11.5 2.5 10.8" fill="none" stroke="#2a5aa8" stroke-width="1.6"/></svg>
<svg class="a" style="left:762px;top:87px" width="11" height="11" viewBox="0 0 11 11"><polygon points="0.5,0.5 3.2,0.5 5.5,2.8 7.8,0.5 10.5,0.5 10.5,3.2 8.2,5.5 10.5,7.8 10.5,10.5 7.8,10.5 5.5,8.2 3.2,10.5 0.5,10.5 0.5,7.8 2.8,5.5 0.5,3.2" fill="#fff" stroke="#5a5a5a" stroke-width="1"/></svg>
<div class="a" style="left:1085px;top:87px;width:11px;height:4px;border:1px solid #5f5f5f;background:#fff"></div>
<div class="a" style="left:1108px;top:87px;width:10px;height:10px;border:1px solid #5f5f5f;border-top-width:2px;background:#fff"></div>

<!-- console panel -->
<div class="a" style="left:382px;top:633px;width:750px;height:95px;background:#fff;border-radius:8px 8px 0 0"></div>
<div class="a" style="left:382px;top:633px;width:750px;height:25px;background:#f3f4f9;border-radius:8px 8px 0 0"></div>
<div class="a" style="left:622px;top:633px;width:94px;height:25px;background:linear-gradient(180deg,#d6e0ee,#f6f8fb);border-radius:7px 7px 0 0"></div>
<div class="a" style="left:405px;top:640px;font-size:12px;color:#7f7f7f;white-space:pre;line-height:15px">Problems</div>
<div class="a" style="left:485px;top:640px;font-size:12px;color:#7f7f7f;white-space:pre;line-height:15px">Javadoc</div>
<div class="a" style="left:557px;top:640px;font-size:12px;color:#7f7f7f;white-space:pre;line-height:15px">Declaration</div>
<div class="a" style="left:645px;top:640px;font-size:12px;color:#000;white-space:pre;line-height:15px">Console</div>
<div class="a" style="left:384px;top:662px;font-size:11.95px;color:#000;white-space:pre;line-height:15px">No consoles to display at this time.</div>
<div class="a" style="left:384px;top:676px;width:746px;height:1px;background:#a0a0a0"></div>

<svg class="a" style="left:385px;top:638px" width="16" height="16" viewBox="0 0 16 16"><rect x="1" y="1" width="13" height="14" fill="#eee8e8" stroke="#b0a0a0" stroke-width="0.8"/><circle cx="5" cy="5" r="2.5" fill="#e06060"/><circle cx="5" cy="11" r="2.5" fill="#f0c040"/><path d="M9 4H13M9 10H13" stroke="#a09090"/></svg>
<div class="a" style="left:469px;top:639px;font-size:12px;color:#9ab0d0;font-style:italic;line-height:15px">@</div>
<svg class="a" style="left:537px;top:638px" width="16" height="16" viewBox="0 0 16 16"><path d="M0.5 0.5H9L12.5 4V15.5H0.5Z" fill="#fdfaf0" stroke="#a09060" stroke-width="0.8"/><path d="M5 4Q3 4 3.5 6Q4 8 3 8.5Q4 9 3.5 11Q3 13 5 13" fill="none" stroke="#7a7a7a" stroke-width="0.9"/><path d="M8 9L14 12L8 15Z" fill="#f8d860" stroke="#c09020" stroke-width="0.6"/></svg>
<svg class="a" style="left:628px;top:639px" width="14" height="14" viewBox="0 0 14 14"><rect x="1" y="1" width="12" height="9" fill="#dfe8f4" stroke="#2a5a9a" stroke-width="1.5"/><path d="M3.5 4H10M3.5 6.5H8" stroke="#2a5a9a" stroke-width="1"/><rect x="4" y="11" width="6" height="2" fill="#2a5a9a"/></svg>
<svg class="a" style="left:697px;top:641px" width="11" height="11" viewBox="0 0 11 11"><polygon points="0.5,0.5 3.2,0.5 5.5,2.8 7.8,0.5 10.5,0.5 10.5,3.2 8.2,5.5 10.5,7.8 10.5,10.5 7.8,10.5 5.5,8.2 3.2,10.5 0.5,10.5 0.5,7.8 2.8,5.5 0.5,3.2" fill="#fff" stroke="#5a5a5a" stroke-width="1"/></svg>
<svg class="a" style="left:984px;top:638px" width="16" height="16" viewBox="0 0 16 16"><rect x="1" y="6" width="12" height="9" fill="#e8e8e8" stroke="#a8a8a8" stroke-width="0.8"/><path d="M8 9L13 3M11 1L15 5L13 6L10 3Z" stroke="#9a9a9a" fill="#b8b8b8"/></svg>
<svg class="a" style="left:1007px;top:638px" width="16" height="16" viewBox="0 0 16 16"><rect x="1.5" y="1.5" width="12" height="9" fill="#eaeaea" stroke="#8a8a8a" stroke-width="1.2"/><path d="M4 4.5H10M4 7H8" stroke="#8a8a8a"/><rect x="4" y="12" width="7" height="2" fill="#8a8a8a"/></svg>
<svg class="a" style="left:1028px;top:643px" width="9" height="6" viewBox="0 0 9 6"><path d="M0.5 0.5H8.5L4.5 5Z" fill="#555"/></svg>
<svg class="a" style="left:1045px;top:637px" width="17" height="17" viewBox="0 0 17 17"><rect x="0.5" y="4.5" width="13" height="11" fill="#eef6fc" stroke="#a09060"/><rect x="0.5" y="4.5" width="13" height="2.2" fill="#3a8ad8"/><path d="M3 15Q10 14 12 8" stroke="#f0dc90" fill="none"/><path d="M12 0.3L15.7 4L12 7.7L8.3 4Z" fill="#fffbe8" stroke="#d49a20" stroke-width="0.9"/><path d="M12 2V6M10 4H14" stroke="#f0c860" stroke-width="0.8"/></svg>
<svg class="a" style="left:1066px;top:643px" width="9" height="6" viewBox="0 0 9 6"><path d="M0.5 0.5H8.5L4.5 5Z" fill="#111"/></svg>
<div class="a" style="left:1085px;top:641px;width:10px;height:4px;border:1px solid #5f5f5f;background:#fff"></div>
<div class="a" style="left:1108px;top:641px;width:10px;height:10px;border:1px solid #5f5f5f;border-top-width:2px;background:#fff"></div>


<!-- desktop icons -->
<svg class="a" style="left:17px;top:8px" width="40" height="45" viewBox="0 0 40 45">
 <path d="M0.5 6.5L17 3L39 8.5L35 42L28 44L5 39Z" fill="#dfe2e6"/>
 <path d="M0.5 6.5L27 12L28 44L5 39Z" fill="#eceef0"/>
 <path d="M27 12L39 8.5L35 42L28 44Z" fill="#cfd3d8"/>
 <path d="M3 7Q10 0 18 4Q26 1 36 8L27 12Z" fill="#f8f8f8"/>
 <path d="M0.5 6.5L27 12L39 8.5" fill="none" stroke="#b8bcc2" stroke-width="0.8"/>
 <path d="M16 20L19.5 23L15 27M9 26Q8 21 13 19M19 33L15 35L14 31M22 31Q24 28 22 25" fill="none" stroke="#1e88e5" stroke-width="3.2"/>
</svg>
<div class="dl" style="top:59px;font-size:11.7px">Thùng rác</div>
<svg class="a" style="left:13px;top:106px" width="48" height="48" viewBox="0 0 48 48"><rect width="48" height="48" fill="#0b78d8"/>
<path fill="#fff" fill-rule="evenodd" d="M9 21.5Q12 9 24 8.5Q38 8.5 38.5 22V27H19.5Q20.5 33.5 28 33.5Q33.5 33.5 38 31V37.5Q33 40 27 39.5Q16.5 39 15.2 29Q14.5 20 22 14.6Q14.5 16 9 21.5ZM19 21H30Q29.5 15.5 24.5 15.5Q19.8 15.5 19 21Z"/></svg>
<svg class="a" style="left:13px;top:142px" width="13" height="13" viewBox="0 0 14 14"><rect x="0.5" y="0.5" width="13" height="13" fill="#f4f4f4" stroke="#cfc4b8"/><path d="M2.8 12.5Q2.3 6.5 7.3 5.3V2.8L12 6.6L7.3 10.4V8.4Q5.8 8.8 5.8 12.5Z" fill="#2f62b0"/></svg>
<div class="dl" style="top:158px;font-size:11.75px">ms-resour...</div>
<svg class="a" style="left:12px;top:204px" width="50" height="50" viewBox="0 0 50 50">
<circle cx="24.8" cy="24.6" r="23.4" fill="#66ad58" stroke="#f4f4f4" stroke-width="1.2"/>
<polygon points="24,21 23.5,1 48,1.5 37,12 48.5,19 48.5,22 35,24" fill="#f6f6f6"/>
<polygon points="37.5,2.6 46.5,2.6 33,17.5 30.5,16" fill="#66ad58"/>
<path d="M27.5 4.5Q29.5 3 31.5 4.5L28.8 15L26.8 14.8Z" fill="#ef7a24"/>
<path d="M34.5 19.5L43 15Q45.5 15.5 44.5 18L35.2 21.5Z" fill="#ef7a24"/>
<circle cx="24.9" cy="24.9" r="10.3" fill="#fff"/>
<circle cx="24.9" cy="24.9" r="7" fill="#66ad58"/>
</svg>
<svg class="a" style="left:13px;top:240px" width="13" height="13" viewBox="0 0 14 14"><rect x="0.5" y="0.5" width="13" height="13" fill="#f4f4f4" stroke="#cfc4b8"/><path d="M2.8 12.5Q2.3 6.5 7.3 5.3V2.8L12 6.6L7.3 10.4V8.4Q5.8 8.8 5.8 12.5Z" fill="#2f62b0"/></svg>
<div class="dl" style="top:257px;font-size:11.5px">Cốc Cốc</div>
<svg class="a" style="left:21px;top:307px" width="33" height="43" viewBox="0 0 33 43"><path d="M0.5 0.5H23L32.5 10V42.5H0.5Z" fill="#f4f4f4" stroke="#d8d8d8"/><path d="M23 0.5V10H32.5" fill="#dcdcdc" stroke="#c8c8c8"/></svg>
<svg class="a" style="left:13px;top:339px" width="13" height="13" viewBox="0 0 14 14"><rect x="0.5" y="0.5" width="13" height="13" fill="#f4f4f4" stroke="#cfc4b8"/><path d="M2.8 12.5Q2.3 6.5 7.3 5.3V2.8L12 6.6L7.3 10.4V8.4Q5.8 8.8 5.8 12.5Z" fill="#2f62b0"/></svg>
<div class="dl" style="top:356px;font-size:11.3px">TLauncher</div>
<svg class="a" style="left:12px;top:404px" width="50" height="46" viewBox="0 0 50 46">
<defs><clipPath id="ecl"><circle cx="27.5" cy="23" r="20.6"/></clipPath></defs>
<circle cx="23.5" cy="23" r="22.3" fill="#f7941e"/>
<circle cx="27.5" cy="23" r="21.5" fill="#140c28"/>
<circle cx="27.5" cy="23" r="20.6" fill="#2e2262"/>
<g clip-path="url(#ecl)">
<circle cx="27.5" cy="29" r="12.5" fill="#46398a"/>
<rect x="0" y="16.6" width="50" height="3" fill="#fff"/>
<rect x="0" y="21.4" width="50" height="3" fill="#fff"/>
<rect x="0" y="25.9" width="50" height="3" fill="#fff"/>
</g>
</svg>
<svg class="a" style="left:13px;top:438px" width="13" height="13" viewBox="0 0 14 14"><rect x="0.5" y="0.5" width="13" height="13" fill="#f4f4f4" stroke="#cfc4b8"/><path d="M2.8 12.5Q2.3 6.5 7.3 5.3V2.8L12 6.6L7.3 10.4V8.4Q5.8 8.8 5.8 12.5Z" fill="#2f62b0"/></svg>
<div class="dl" style="top:455px;font-size:11px">Eclipse Java<br>2019-09</div>

<!-- taskbar -->
<div class="a" style="left:0;top:728px;width:1366px;height:40px;background:linear-gradient(90deg,#0e1216 0%,#1a1c20 12%,#2a2b2e 25%,#2f3033 50%,#2c2d30 75%,#1c1e22 85%,#101419 100%)"></div>
<svg class="a" style="left:15px;top:739px" width="18" height="18" viewBox="0 0 18 18"><path d="M1 3L7.5 2.1V8.4H1ZM8.5 2L17 0.8V8.4H8.5ZM1 9.4H7.5V15.8L1 15ZM8.5 9.4H17V17.2L8.5 16Z" fill="#fff"/></svg>
<svg class="a" style="left:63px;top:737px" width="20" height="20" viewBox="0 0 20 20"><circle cx="11.5" cy="8.5" r="6.3" fill="none" stroke="#fff" stroke-width="1.4"/><path d="M7 13L1.5 18.5" stroke="#fff" stroke-width="1.6"/></svg>
<svg class="a" style="left:105px;top:732px" width="30" height="30" viewBox="105 732 30 30"><path d="M113 740V742.2H122V740M113 755V752.8H122V755" fill="none" stroke="#fff" stroke-width="1.3"/><rect x="113.2" y="745.1" width="8.8" height="5.2" fill="none" stroke="#fff" stroke-width="1.4"/><path d="M126.6 740V742.6M126.6 748.5V755" stroke="#fff" stroke-width="1.4"/><rect x="125.3" y="744.5" width="2.7" height="2.4" fill="#fff"/></svg>
<svg class="a" style="left:160px;top:737px" width="22" height="22" viewBox="8 7.5 31.5 32.5"><path fill="#1585e0" fill-rule="evenodd" d="M9 21.5Q12 9 24 8.5Q38 8.5 38.5 22V27H19.5Q20.5 33.5 28 33.5Q33.5 33.5 38 31V37.5Q33 40 27 39.5Q16.5 39 15.2 29Q14.5 20 22 14.6Q14.5 16 9 21.5ZM19 21H30Q29.5 15.5 24.5 15.5Q19.8 15.5 19 21Z"/></svg>
<svg class="a" style="left:209px;top:739px" width="22" height="18" viewBox="0 0 22 18"><path d="M0.5 1.5H7L8.5 3H21.5V17.5H0.5Z" fill="#f8d775"/><rect x="0.5" y="4.5" width="21" height="13" fill="#fbe49a"/><rect x="1" y="1" width="6" height="2" fill="#e8b830"/><path d="M6 17.5V10H16V17.5H13V13H9V17.5Z" fill="#2a9ae0"/></svg>
<svg class="a" style="left:257px;top:736px" width="23" height="24" viewBox="0 0 23 24"><path d="M7 7V4Q7 1 11.5 1Q16 1 16 4V7" fill="none" stroke="#fff" stroke-width="1.5"/><rect x="0.5" y="6" width="22" height="17" rx="1.5" fill="#fff"/><rect x="6" y="9.5" width="5" height="5" fill="#f25022"/><rect x="12" y="9.5" width="5" height="5" fill="#7fba00"/><rect x="6" y="15.5" width="5" height="5" fill="#00a4ef"/><rect x="12" y="15.5" width="5" height="5" fill="#ffb900"/></svg>
<svg class="a" style="left:300px;top:732px" width="35" height="30" viewBox="300 732 35 30"><path d="M305.8 743.4L317.8 737.8L330.1 743.4V757.2H305.8Z" fill="#fff"/><path d="M307.2 744.2H328.8L319.5 749.6L324.8 753.8L317.8 750.4Z" fill="#2b2c2f"/></svg>
<svg class="a" style="left:350px;top:732px" width="34" height="30" viewBox="350 732 34 30">
<rect x="355.3" y="739" width="10.8" height="9.6" rx="1.2" fill="#ececec"/><rect x="368" y="739" width="9.8" height="9.6" rx="1.2" fill="#ececec"/><rect x="361.5" y="748" width="11.1" height="9.2" rx="1.2" fill="#e8e8e8"/>
<rect x="355.3" y="746.5" width="10.8" height="2" fill="#c8c8c8"/><rect x="368" y="746.5" width="9.8" height="2" fill="#c8c8c8"/><rect x="361.5" y="755.2" width="11.1" height="2" fill="#c4c4c4"/>
<text x="361" y="745.5" font-size="8" font-weight="bold" fill="#f02828" text-anchor="middle" font-family="Liberation Sans">u</text>
<text x="373.2" y="745.5" font-size="8" font-weight="bold" fill="#f02828" text-anchor="middle" font-family="Liberation Sans">i</text>
<text x="367.3" y="754" font-size="8" font-weight="bold" fill="#f02828" text-anchor="middle" font-family="Liberation Sans">n</text>
</svg>
<svg class="a" style="left:403px;top:736px" width="25" height="23" viewBox="0 0 25 23">
<defs><clipPath id="ecl2"><circle cx="14" cy="11.5" r="10.3"/></clipPath></defs>
<circle cx="12" cy="11.5" r="11.2" fill="#f7941e"/><circle cx="14" cy="11.5" r="10.9" fill="#140c28"/><circle cx="14" cy="11.5" r="10.3" fill="#2e2262"/>
<g clip-path="url(#ecl2)"><circle cx="14" cy="14.5" r="6.5" fill="#46398a"/>
<rect x="0" y="7.6" width="25" height="1.7" fill="#fff"/><rect x="0" y="10.4" width="25" height="1.7" fill="#fff"/><rect x="0" y="13.2" width="25" height="1.7" fill="#fff"/></g>
</svg>
<div class="a" style="left:347px;top:766px;width:40px;height:2px;background:#76b9ed"></div>
<div class="a" style="left:396px;top:766px;width:40px;height:2px;background:#76b9ed"></div>
<svg class="a" style="left:1079px;top:739px" width="16" height="16" viewBox="0 0 16 16"><circle cx="5" cy="8.5" r="2.5" fill="none" stroke="#fff" stroke-width="1.1"/><path d="M1 15Q1 11.5 5 11.5Q9 11.5 9 15" fill="none" stroke="#fff" stroke-width="1.1"/><circle cx="11" cy="4" r="2.5" fill="none" stroke="#fff" stroke-width="1.1"/><path d="M8 9Q8.5 7 11 7Q15 7 15 10.5" fill="none" stroke="#fff" stroke-width="1.1"/></svg>
<svg class="a" style="left:1116px;top:743px" width="14" height="9" viewBox="0 0 14 9"><path d="M1 8L7 2L13 8" fill="none" stroke="#fff" stroke-width="1.2"/></svg>
<svg class="a" style="left:1135px;top:738px" width="24" height="18" viewBox="1135 738 24 18"><path d="M1140 741.7V744.3M1143 741.7V744.3M1138.8 744.5H1144.2V746.5Q1144.2 748.8 1141.5 748.8V752.8" fill="none" stroke="#fff" stroke-width="1"/><rect x="1143.6" y="744.3" width="10.6" height="8.4" fill="none" stroke="#fff" stroke-width="1"/><rect x="1145" y="745.8" width="4.6" height="5.4" fill="#fff"/><rect x="1154.4" y="746.5" width="1.2" height="4" fill="#fff"/></svg>
<svg class="a" style="left:1163px;top:740px" width="16" height="16" viewBox="1163 740 16 16"><path d="M1166 753.5A10.5 10.5 0 0 1 1176.5 743M1169 753.5A7.5 7.5 0 0 1 1176.5 746M1172 753.5A4.5 4.5 0 0 1 1176.5 749" fill="none" stroke="#fff" stroke-width="1"/><circle cx="1176.3" cy="753.3" r="1.3" fill="#fff"/></svg>
<svg class="a" style="left:1187px;top:740px" width="17" height="15" viewBox="0 0 17 15"><path d="M1 5H4L8 1.5V13.5L4 10H1Z" fill="none" stroke="#fff" stroke-width="1.1"/><path d="M10.5 5Q12 7.5 10.5 10M12.5 3Q15 7.5 12.5 12M14.5 1Q18 7.5 14.5 14" fill="none" stroke="#fff" stroke-width="1.1"/></svg>
<div class="a" style="left:1210px;top:733px;width:30px;text-align:center;font-size:11.8px;color:#fff;line-height:16px">VIE<br>US</div>
<div class="a" style="left:1238px;top:733px;width:80px;text-align:center;font-size:11.7px;color:#fff;line-height:16px">8:33 CH<br>27/10/2019</div>
<svg class="a" style="left:1324px;top:739px" width="26" height="26" viewBox="0 0 26 26"><path d="M1 1H19V13H8L5 16V13H1Z" fill="#fff"/><path d="M4 4.5H16M4 7.5H16M4 10.5H12" stroke="#1b1d21" stroke-width="1"/><circle cx="16.5" cy="16" r="8" fill="#2b2c30" stroke="#8a8a8a" stroke-width="0.9"/><text x="16.5" y="20" font-size="11" font-weight="bold" fill="#fff" text-anchor="middle" font-family="Liberation Sans">2</text></svg>
<div class="a" style="left:1360px;top:728px;width:1px;height:40px;background:#5a5c60"></div>
</body></html>
